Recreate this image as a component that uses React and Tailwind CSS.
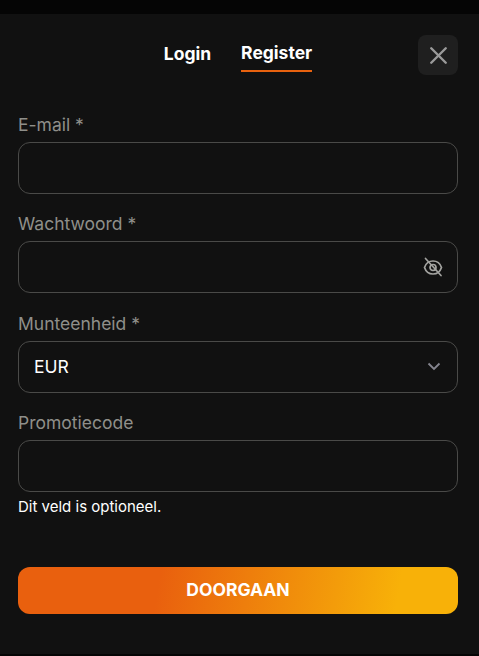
import { useState } from 'react';
import { X } from 'lucide-react';

const Field = ({ label, children }) => (
  <div>
    <label className="mb-[4px] block h-[26px] text-[17.5px] leading-[26px] text-[#8f8f8a]">{label}</label>
    {children}
  </div>
);

const boxClass = 'h-[52px] w-full rounded-[12px] border border-[#4a4a48] bg-transparent flex items-center px-[15px]';

// eye with a slash through it, the lucide one has a broken outline
const EyeSlash = () => (
  <svg width="20" height="20" viewBox="0 0 20 20" fill="none" stroke="#a3a3a0" strokeWidth="1.7" strokeLinecap="round" className="mr-[-1px]">
    <path d="M1.500 10.500C3 6 6.500 4 10 4s7 2 8.500 6.500C17 15 13.500 17 10 17s-7-2-8.500-6.500Z" />
    <circle cx="10" cy="10.500" r="3" />
    <path d="M2.500 1.500 18 18.500" />
  </svg>
);

const Chevron = () => (
  <svg width="14" height="9" viewBox="0 0 14 9" fill="none" stroke="#85858f" strokeWidth="1.800" className="mr-[1px]">
    <path d="M1.500 1.500 7 7 12.500 1.500" />
  </svg>
);

const App = () => {
  const [tab] = useState('register');

  return (
    <div className="h-[656px] w-[479px] bg-[#050505] font-['Inter',sans-serif] overflow-hidden">
      <div className="h-[14px]" />
      <div className="h-[640px] bg-[#111111] pl-[18px] pr-[21px] pt-[21px]">
        {/* Tabs */}
        <div className="relative flex h-[40px] justify-center gap-[30px]">
          <button className="h-[37px] text-[17.5px] font-bold leading-[36px] text-white">Login</button>
          <button className={`h-[37px] border-b-2 text-[17.5px] font-bold leading-[36px] text-white ${tab === 'register' ? 'border-[#e8620f]' : 'border-transparent'}`}>Register</button>
          <button className="absolute right-0 top-0 flex h-[40px] w-[40px] items-center justify-center rounded-[8px] bg-[#1f1f1f] text-[#9a9a9a]">
            <X size={29} strokeWidth={2} />
          </button>
        </div>

        <div className="mt-[37px] flex flex-col gap-[17.33px]">
          <Field label="E-mail *">
            <div className={boxClass} />
          </Field>
          <Field label="Wachtwoord *">
            <div className={`${boxClass} justify-end`}>
              <EyeSlash />
            </div>
          </Field>
          <Field label="Munteenheid *">
            <div className={`${boxClass} justify-between`}>
              <span className="text-[17.5px] text-white">EUR</span>
              <Chevron />
            </div>
          </Field>
          <Field label="Promotiecode">
            <div className={boxClass} />
            <p className="mt-[5px] text-[15px] leading-[20px] text-white">Dit veld is optioneel.</p>
          </Field>
        </div>

        <button className="mt-[50px] h-[47px] w-full rounded-[12px] bg-[linear-gradient(100deg,#e9600e_0%,#e9600e_32%,#f39c0a_72%,#f8b108_86%,#f8b108_100%)] text-[17.5px] font-bold text-white">
          DOORGAAN
        </button>
      </div>
    </div>
  );
};

export default App;
